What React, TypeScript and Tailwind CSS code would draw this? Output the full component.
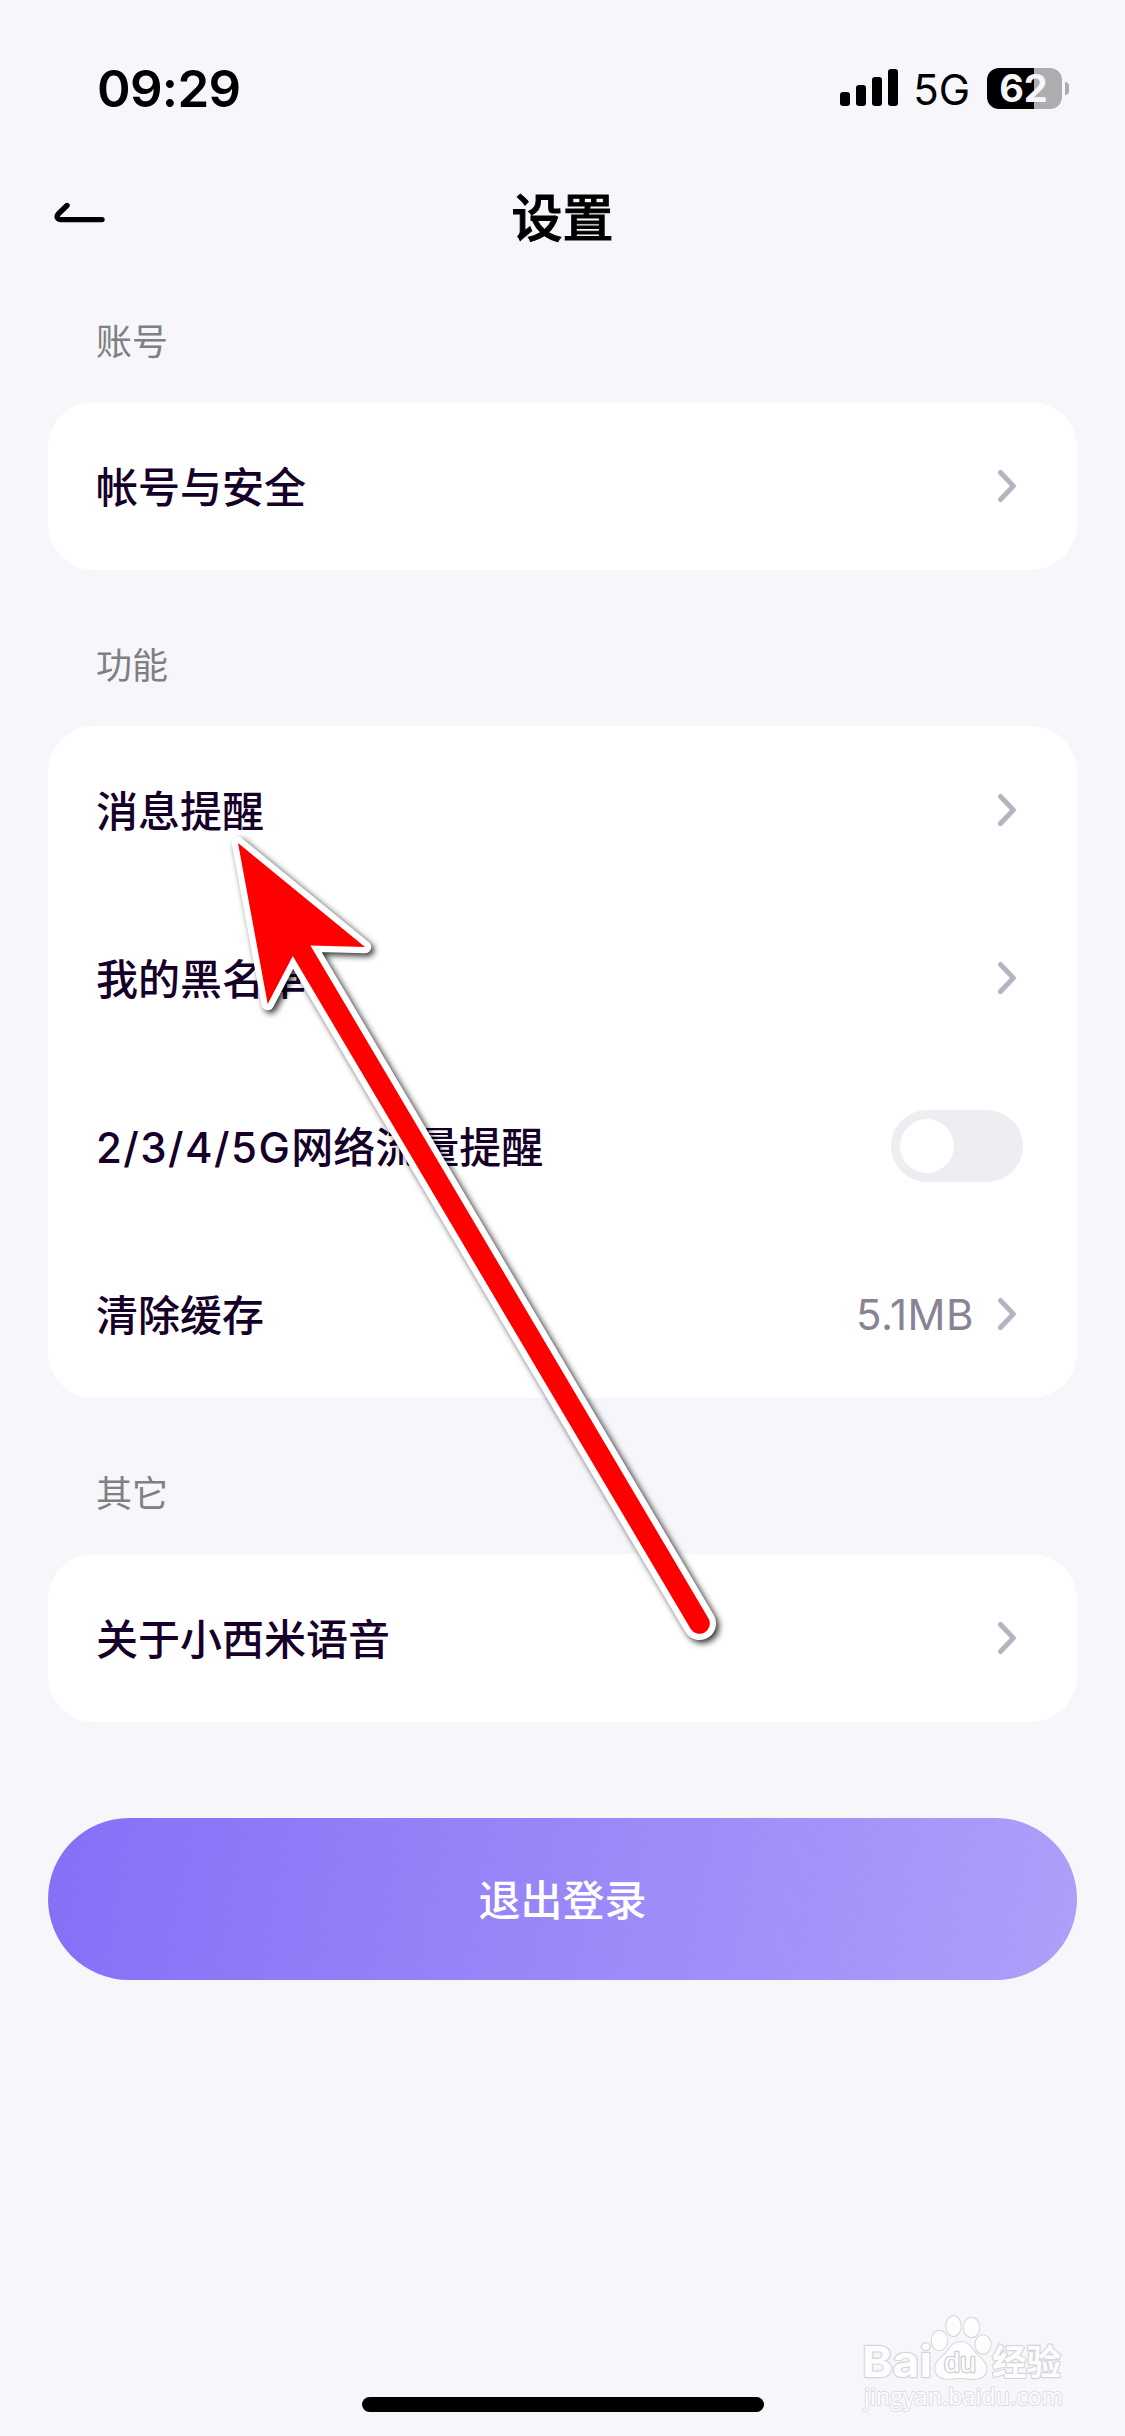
import React from "react";

const Chevron = () => (
  <svg className="h-[36px] w-[22px] shrink-0" viewBox="0 0 22 36" fill="none" stroke="#b8b3c1" strokeWidth="5" strokeLinecap="round" strokeLinejoin="round">
    <path d="M3.500 4.500 L16.300 18 L3.500 31.500" />
  </svg>
);

const Label = ({ children }: { children: React.ReactNode }) => (
  <h2 className="px-12 text-[36px] leading-[52px] text-[#808080]">{children}</h2>
);

const Card = ({ children }: { children: React.ReactNode }) => (
  <section className="rounded-[46px] bg-white pl-12">{children}</section>
);

const Row = ({ title, children }: { title: React.ReactNode; children: React.ReactNode }) => (
  <div className="flex h-[168px] items-center justify-between text-[42px] font-medium text-[#160029]">
    <span className="whitespace-nowrap pt-[2px]">{title}</span>
    {children}
  </div>
);

const Arrow = () => (
  <div className="pointer-events-none absolute left-0 top-0">
    <svg width="1125" height="1700" viewBox="0 0 1125 1700" className="drop-shadow-[3px_3px_3px_rgba(0,0,0,0.8)]">
      <path
        d="M238 843 L365 947 L310.4 945.4 L708.4 1618.3 A10.3 10.3 0 0 1 690.6 1628.7 L292.8 956 L267.7 1004 Z"
        fill="#ff0000"
        stroke="#ffffff"
        strokeWidth="12.5"
        strokeLinejoin="round"
        paintOrder="stroke"
      />
    </svg>
  </div>
);

const Watermark = () => (
  <div className="absolute left-[860px] top-[2310px]">
    <svg width="210" height="105" viewBox="0 0 210 105" fill="#fdfdfe" stroke="#d6d6da" strokeWidth="2.4" paintOrder="stroke" strokeLinejoin="round">
      <text x="2" y="67" fontSize="43" fontWeight="700" textLength="70" lengthAdjust="spacingAndGlyphs" fontFamily="Inter, sans-serif">Bai</text>
      <ellipse cx="79.500" cy="30.500" rx="7.800" ry="9.800" strokeWidth="2" />
      <ellipse cx="93.500" cy="16" rx="7.200" ry="10" strokeWidth="2" />
      <ellipse cx="111.500" cy="17.500" rx="7.800" ry="9.700" strokeWidth="2" />
      <ellipse cx="123" cy="34.500" rx="7.600" ry="9.300" strokeWidth="2" />
      <path d="M101 32 C110 32 112 40 118 46 C131 55 129 69 113 69 C108 69 106 68 101 68 C95 68 92 69 88 69 C73 68 71 55 83 46 C90 40 91 32 101 32 Z" strokeWidth="2" />
      <text x="84" y="62" fontSize="28" textLength="32" lengthAdjust="spacingAndGlyphs" fontFamily="Liberation Sans, sans-serif" stroke="#cfcfd4" strokeWidth="2.600">du</text>
      <text x="132" y="65" fontSize="35" fontWeight="700" textLength="69" lengthAdjust="spacingAndGlyphs" fontFamily="Noto Sans CJK SC, sans-serif">经验</text>
      <text x="4" y="95" fontSize="23" textLength="199" lengthAdjust="spacing" fontFamily="Open Sans, sans-serif" stroke="#dedee3" strokeWidth="2">jingyan.baidu.com</text>
    </svg>
  </div>
);

export default function App() {
  return (
    <main className="relative flex h-[2436px] w-[1125px] flex-col overflow-hidden bg-[#f6f6fb] font-['Inter','Noto_Sans_CJK_SC',sans-serif]">
      <header className="flex h-[144px] items-end justify-between pl-[97px] pr-[56px] text-black">
        <time className="mb-[24px] text-[51px] font-semibold leading-[62px] tracking-[-0.7px]">09:29</time>
        <div className="mb-[35px] flex h-[42px] items-center">
          <div className="mb-[1px] flex items-end gap-[6px]">
            <i className="h-[14px] w-[10px] rounded-[3px] bg-black" />
            <i className="h-[21px] w-[10px] rounded-[3px] bg-black" />
            <i className="h-[29px] w-[10px] rounded-[3px] bg-black" />
            <i className="h-[37px] w-[10px] rounded-[3px] bg-black" />
          </div>
          <span className="ml-[15px] mt-[3px] text-[42px] leading-[42px]">5G</span>
          <div className="ml-[17px] flex h-[41px] w-[75px] items-center justify-center rounded-[12px] bg-linear-to-r from-black from-[62.500%] to-[#adadb0] to-[62.500%] text-[38px] font-bold leading-[41px] text-[#f6f6fb]"><span className="-ml-[2px]">62</span></div>
          <i className="ml-[3px] h-[13px] w-[4px] rounded-r-full bg-[#adadb0]" />
        </div>
      </header>

      <nav className="relative flex h-[148px] items-center justify-center text-black">
        <svg className="absolute left-[48px] top-[52px]" width="64" height="36" viewBox="0 0 64 36" fill="none" stroke="black" strokeWidth="5.400" strokeLinecap="round" strokeLinejoin="round">
          <path d="M19 9.500 L11 17.300 C7.500 20.800 9.500 23.600 13 23.600 H54" />
        </svg>
        <h1 className="pt-[2px] text-[51px] font-medium leading-[74px] [-webkit-text-stroke:1px_black]">设置</h1>
      </nav>

      <div className="flex flex-col px-12 pt-[24px]">
        <Label>账号</Label>
        <div className="mt-[34px]">
          <Card>
            <Row title="帐号与安全"><div className="mr-[58px] flex"><Chevron /></div></Row>
          </Card>
        </div>
        <div className="mt-[70px]"><Label>功能</Label></div>
        <div className="mt-[34px]">
          <Card>
            <Row title="消息提醒"><div className="mr-[58px] flex"><Chevron /></div></Row>
            <Row title="我的黑名单"><div className="mr-[58px] flex"><Chevron /></div></Row>
            <Row title={<><span className="tracking-[1.45px]">2/3/4/5G</span>网络流量提醒</>}>
              <button role="switch" aria-checked="false" aria-label="流量提醒" className="mr-[54px] flex h-[72px] w-[132px] items-center rounded-full bg-[#ededf2] pl-[9px]">
                <span className="size-[54px] rounded-full bg-white" />
              </button>
            </Row>
            <Row title="清除缓存">
              <div className="mr-[58px] flex items-center gap-[23px]">
                <span className="font-normal tracking-[0.500px] text-[#8a8295]">5.1MB</span>
                <Chevron />
              </div>
            </Row>
          </Card>
        </div>
        <div className="mt-[70px]"><Label>其它</Label></div>
        <div className="mt-[34px]">
          <Card>
            <Row title="关于小西米语音"><div className="mr-[58px] flex"><Chevron /></div></Row>
          </Card>
        </div>
        <button className="mt-[96px] h-[162px] rounded-full bg-[linear-gradient(100deg,#8470f7,#ae9ff9)] pt-[2px] text-[42px] font-medium text-white">退出登录</button>
      </div>

      <div className="mx-auto mb-[24px] mt-auto h-[15px] w-[402px] rounded-full bg-black" />
      <Watermark />
      <Arrow />
    </main>
  );
}
